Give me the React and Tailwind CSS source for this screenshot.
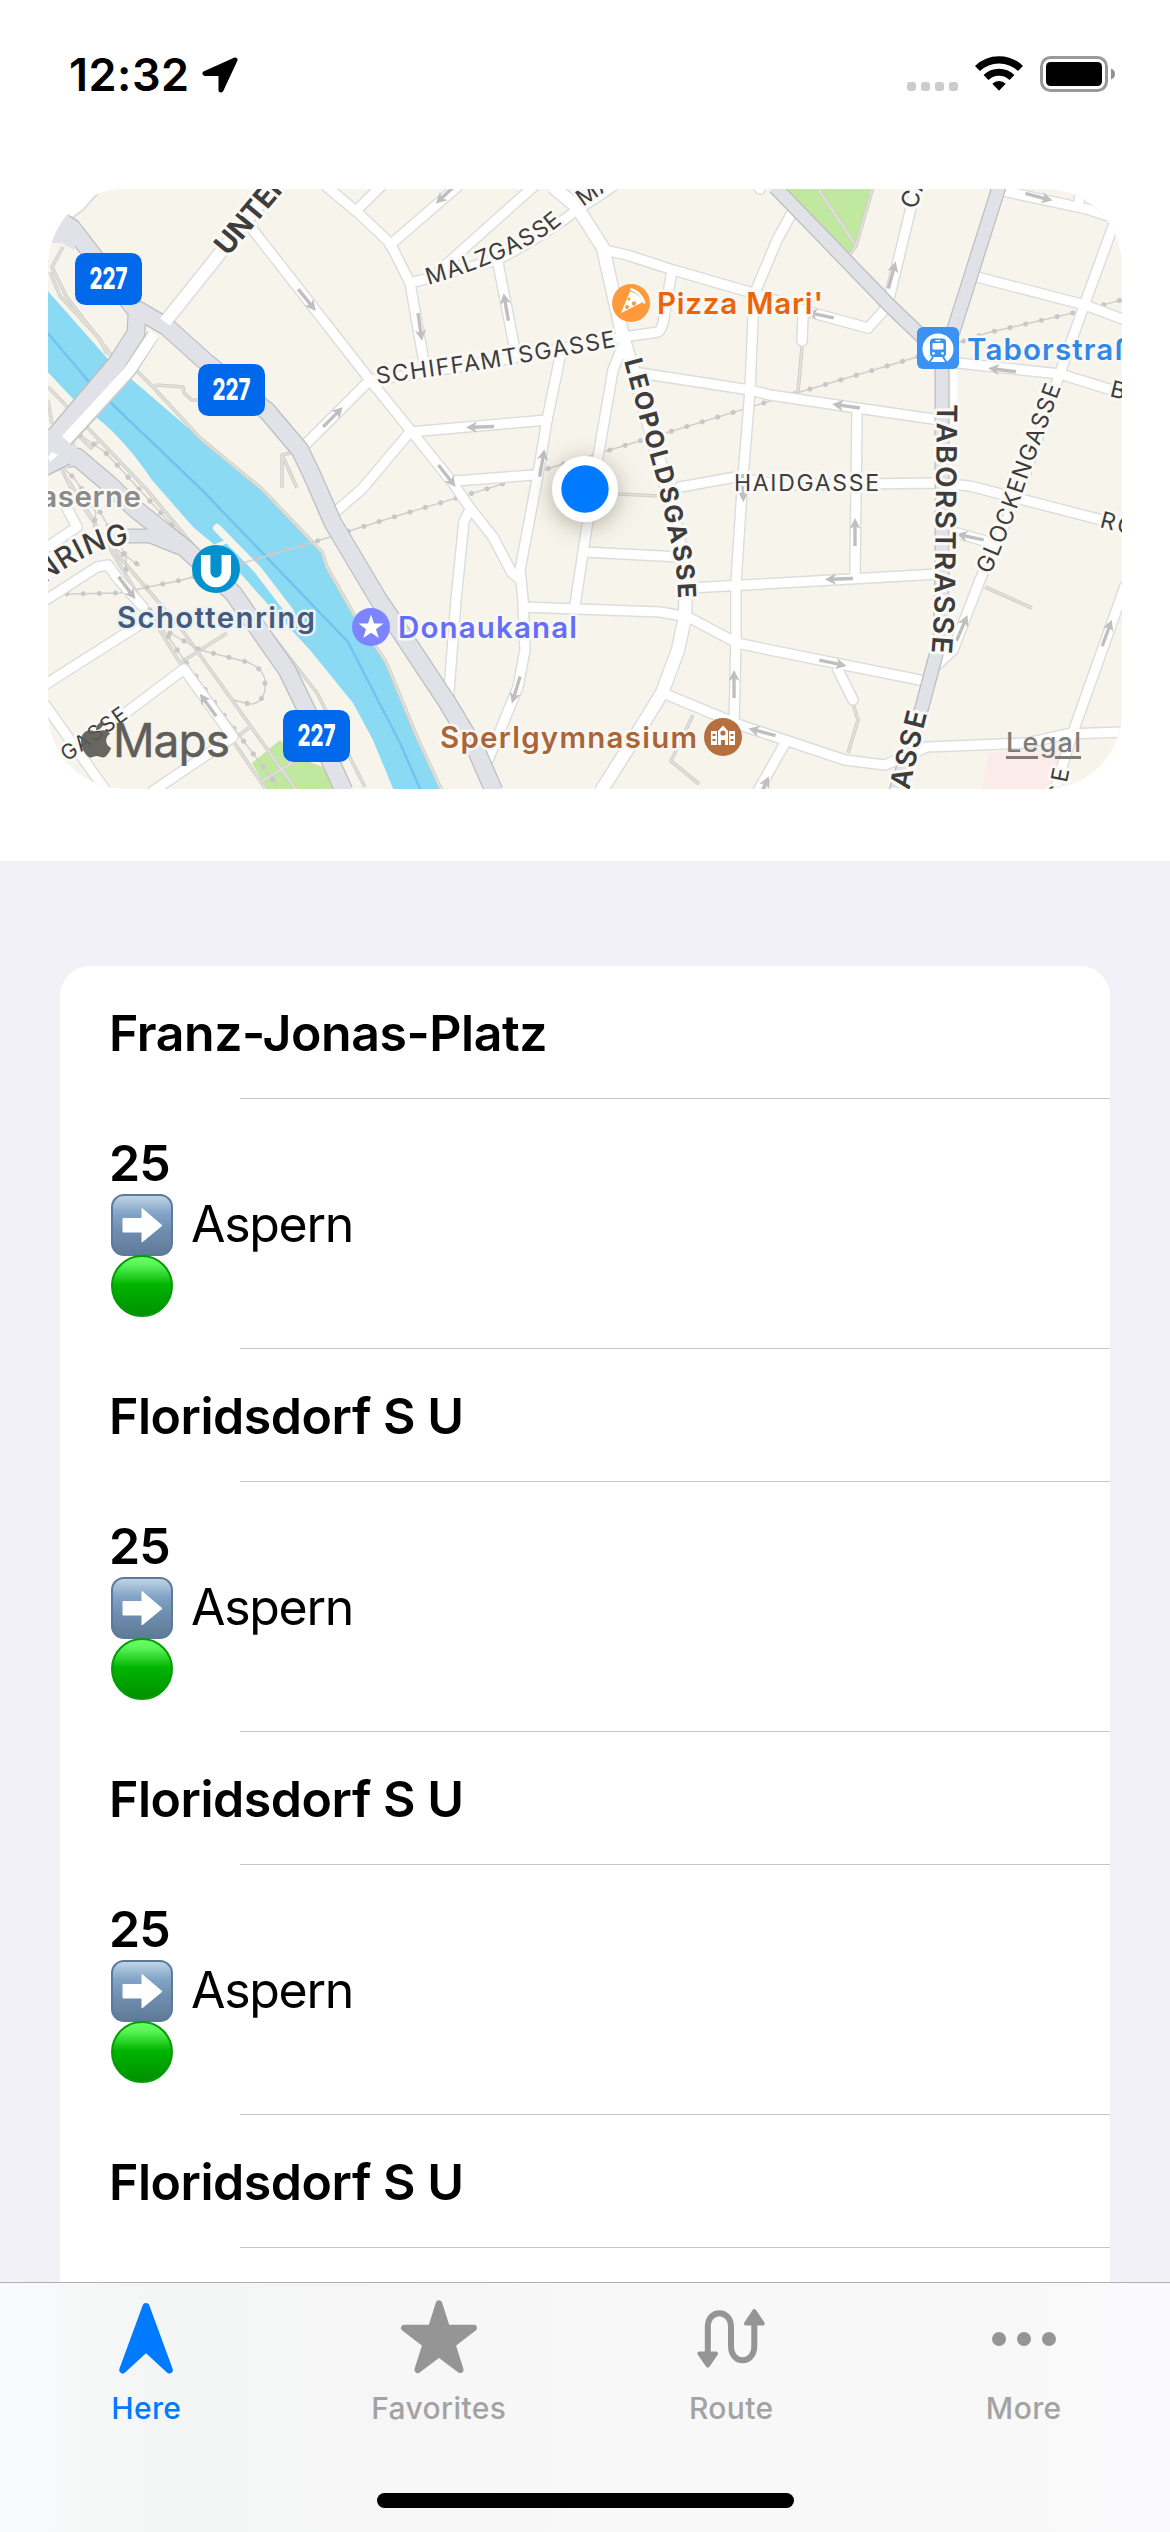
import React from "react";
import { FaApple } from "react-icons/fa";

const streets = [
  "M253 230 L370 380 L453 483 L470 508 L493 537 L512 573 L521 580",
  "M327 187 L357 212 L390 243 L410 283 L423 357",
  "M390 245 L457 187",
  "M357 210 L380 187",
  "M440 270 L533 187",
  "M410 283 L497 260 Q545 235 577 210 L612 187",
  "M498 263 L515 350",
  "M370 380 L403 376 L513 358 L623 337 L658 332 Q662 330 664 318 L672 270",
  "M605 250 L627 255 L673 270 L753 293 L813 313 L868 328 L887 307 L908 220 L916 187",
  "M793 211 L777 240 L754 295 L750 390 L742 490 L736 583 L736 643 L734 722",
  "M640 373 L750 390 L770 395 L850 407 L940 420",
  "M560 357 L547 420 L537 480 L520 570 L523 600 L525 650 L518 687 L488 760",
  "M410 432 L547 420",
  "M410 432 L362 489 L334 513",
  "M370 380 L303 447",
  "M455 481 L534 475",
  "M623 345 L613 370 L598 457 L588 520 L575 605",
  "M523 607 L660 612 L688 617 L737 643 L770 650 L925 681",
  "M585 552 L680 557",
  "M690 588 L780 583 L938 574",
  "M680 487 L736 477 L780 485 L937 483 L970 486 L1125 526",
  "M857 411 L855 577",
  "M803 316 L802 341",
  "M977 277 L1085 305 L1125 320",
  "M1116 218 L1085 303 L1060 373 L1020 490 L980 580 L953 650 L938 664",
  "M958 363 L1060 374 L1125 394",
  "M1003 191 L1087 209 L1118 219",
  "M1080 187 L1079 205",
  "M957 533 L992 543",
  "M1125 586 L1072 735 L1062 767 L1055 791",
  "M663 693 L740 725 L770 735 L845 760 L885 765 L927 747 L1027 743 L1067 734 L1125 732",
  "M838 670 L853 700",
  "M785 743 L758 791",
  "M469 512 L464 521 L456 600 L448 704",
  "M46 600 L97 567 L108 565 L118 579 L143 607",
  "M46 684 L150 618",
  "M60 760 L127 712 L184 669 L233 737 L153 791",
  "M46 706 L106 791",
  "M46 548 L77 527 L67 508",
  "M757 185 L760 189",
];

const wideStreets = [
  "M553 187 L577 207 L603 248 L623 337 L645 410 L670 500 L686 575 L685 617 L678 650 L662 693 L627 750 L601 791",
];

const grayRoads = [
  "M62 222 L72 228 L133 307 L167 327 L207 363 L267 411 L300 450 L312 475 L333 523 L380 602 L400 631 L447 702 L477 752 L494 791",
  "M137 312 L136 333 L117 363 L55 436 L44 452",
  "M44 462 L77 457 L110 485 L133 507 L187 550 L233 593 L287 670 L320 738 L344 791",
];

const grayNarrow = [
  "M775 187 L890 306 L938 352",
  "M999 187 L953 332 L942 365 L942 573 L940 640 L922 707 L896 791",
  "M118 536 L150 536 L180 548",
];

const footpaths = [
  "M50 272 L60 296 L100 339 L106 352 L133 367 L153 387 L200 438 L262 489 L322 552 L327 567 L353 613 L386 662 L417 737 L442 791",
  "M63 247 L52 267 L66 296 L112 356",
  "M153 387 L157 385 L183 387 L184 393 L192 400 L200 400",
  "M282 488 L282 455 L290 453 M282 455 L297 488",
  "M48 387 L87 427 L147 490 L197 550 L247 603 L317 693 L365 787",
  "M78 435 L91 448 L100 440",
  "M48 400 L52 424",
  "M62 470 L72 490 L110 546 L180 627 L297 791",
  "M68 480 L88 512 L138 595 L180 663 L267 791",
  "M180 663 L227 633",
  "M233 740 L250 727",
  "M262 781 L297 760",
  "M802 347 L798 392",
  "M817 187 L856 246 L873 187 M856 246 L850 254",
  "M853 704 L858 720 L848 753",
  "M985 587 L1032 608",
  "M693 715 L671 761 L699 784",
  "M618 494 L660 496",
];

const rails = [
  "M67 594 L120 593 L182 580 L243 563 L327 538 L400 515 L493 487 L550 468 L610 450 L767 402 L800 392 L917 357 L987 333 L1077 312 L1125 299",
  "M170 633 L200 650 L247 662 Q263 668 265 680 L265 690 Q262 704 250 704 L233 700",
  "M80 435 L105 452 L138 488 L190 545",
  "M92 505 L96 513 L93 530 M100 512 L126 556 L126 575 M110 545 L140 566",
  "M150 610 L182 657 L220 710 L248 747 L278 786",
  "M60 465 L74 478 L95 508",
];

const arrows = [
  [307, 300, 51], [333, 417, -45], [446, 194, 137], [420, 327, 82], [506, 307, -100],
  [480, 427, 178], [542, 463, -80], [447, 476, 52], [1039, 197, 15], [892, 275, -75],
  [820, 315, 192], [1002, 370, 187], [846, 406, 188], [127, 588, 53], [208, 705, -126],
  [516, 690, 107], [734, 684, -90], [762, 732, 195], [743, 488, 88], [763, 789, -65],
  [855, 532, -90], [839, 579, 178], [970, 537, 192], [962, 628, -67], [1107, 633, -70],
  [833, 663, 12],
];

function Lines({ paths, ...props }) {
  return (
    <g fill="none" strokeLinejoin="round" {...props}>
      {paths.map((d) => <path key={d} d={d} />)}
    </g>
  );
}

function StreetLabel({ id, d, length, size = 23, weight = 430, children }) {
  return (
    <>
      <path id={id} d={d} fill="none" />
      <text
        fontSize={size}
        fontWeight={weight}
        fill="#3f3d3b"
        stroke="#faf9f5"
        strokeWidth="6"
        strokeLinejoin="round"
        paintOrder="stroke"
        textLength={length}
      >
        <textPath href={`#${id}`} textLength={length}>{children}</textPath>
      </text>
    </>
  );
}

function Place({ x, y, color, length, anchor = "start", halo = "#faf8f3", children }) {
  return (
    <text
      x={x}
      y={y}
      fill={color}
      fontSize="29.5"
      fontWeight="600"
      textAnchor={anchor}
      textLength={length}
      stroke={halo}
      strokeWidth="5"
      strokeLinejoin="round"
      paintOrder="stroke"
    >
      {children}
    </text>
  );
}

function Shield({ x, y }) {
  return (
    <g>
      <rect x={x} y={y} width="67" height="52" rx="10.5" fill="#0069eb" />
      <text x={x + 14.5} y={y + 36} fontSize="30" fontWeight="800" fill="#fff" textLength="38" lengthAdjust="spacingAndGlyphs">227</text>
    </g>
  );
}

function MapView() {
  return (
    <svg viewBox="48 189 1074 600" className="block h-[600px] w-[1074px]" fontFamily="Inter, sans-serif">
      <rect x="48" y="189" width="1074" height="600" fill="#f6f4eb" />
      <path d="M44 189 H99 L84 209 L70 218 L44 250 Z" fill="#fff" />
      <path d="M99 192 L84 209 L70 220" stroke="#dcdedf" strokeWidth="2" fill="none" />
      <path d="M780 187 H873 L857 246 L850 254 Z" fill="#c1e89f" />
      <path d="M252 763 L280 740 L297 757 L323 767 L336 791 H268 Z" fill="#c1e89f" />
      <path d="M989 753 L1060 747 L1049 791 H981 Z" fill="#fbebea" />

      <path
        d="M46 289 L108 359 L130 378 L200 438 L263 490 L323 552 L328 567 L353 613 L387 663 L417 737 L443 791 H394 L373 740 L353 703 L310 650 L273 610 L217 547 L193 527 L152 480 Q125 440 96 417 L74 400 L46 370 Z"
        fill="#8bdaf4"
      />
      <path d="M46 331 L90 383 L110 402 L202 490 L348 642 L400 743 L421 791" fill="none" stroke="#72c3ef" strokeWidth="2.5" />
      <path d="M217 528 L258 570 L290 612" fill="none" stroke="#f6f4eb" strokeWidth="8" strokeLinecap="round" />
      <path d="M215 546 L228 541" stroke="#f6f4eb" strokeWidth="4" />

      <Lines paths={footpaths} stroke="#cfd0cb" strokeWidth="3.6" />
      <Lines paths={footpaths} stroke="#e3e2da" strokeWidth="1.6" />
      <Lines paths={rails} stroke="#cfcfcd" strokeWidth="1.4" />
      <Lines paths={rails} stroke="#c8c8c8" strokeWidth="5" strokeLinecap="round" strokeDasharray="0.1 16" />

      <Lines paths={streets} stroke="#dbdddd" strokeWidth="12" strokeLinecap="round" />
      <Lines paths={wideStreets} stroke="#dbdddd" strokeWidth="15" />
      <path d="M165 322 L217 257 L288 168" stroke="#dbdddd" strokeWidth="15" fill="none" />
      <Lines paths={streets} stroke="#fff" strokeWidth="9.2" strokeLinecap="round" />
      <Lines paths={wideStreets} stroke="#fff" strokeWidth="12.2" />

      <Lines paths={grayRoads} stroke="#bdbec1" strokeWidth="19" />
      <Lines paths={grayNarrow} stroke="#bdbec1" strokeWidth="15" />
      <Lines paths={grayRoads} stroke="#e1e2e7" strokeWidth="16.5" />
      <Lines paths={grayNarrow} stroke="#e1e2e7" strokeWidth="12.5" />
      <path d="M48 236 L58 228 L62 220 L67 213 L78 231 L74 250 L62 243 H48 Z" fill="#e1e2e7" />
      <path d="M48 430 L70 428 L78 452 L68 468 L48 474 Z" fill="#e1e2e7" />
      <path d="M48 475 L70 464" stroke="#bdbec1" strokeWidth="1.5" />
      <path d="M153 335 L130 371 L67 441" stroke="#c9cbcd" strokeWidth="13" fill="none" />
      <path d="M154 334 L130 370 L66 440" stroke="#fff" strokeWidth="11" fill="none" />
      <path d="M165 322 L217 257 L288 168" stroke="#fff" strokeWidth="12" fill="none" />
      <path d="M48 457 l4 -5 l6 3 l-8 7 Z" fill="#fff" />
      <path d="M954 370 V425" stroke="#fff" strokeWidth="6" />

      <g stroke="#bfbfbf" strokeWidth="3.4" fill="none">
        {arrows.map(([x, y, a]) => (
          <g key={`${x}-${y}`} transform={`translate(${x} ${y}) rotate(${a})`}>
            <path d="M-14 0 H8" />
            <path d="M14 0 L3 -5.6 L6 0 L3 5.6 Z" fill="#bfbfbf" stroke="none" />
          </g>
        ))}
      </g>

      <StreetLabel id="malz" d="M428 285 Q508 262 556 228 L580 209" length="149">MALZGASSE</StreetLabel>
      <StreetLabel id="mal2" d="M583 207 L660 153" length="52">MAL</StreetLabel>
      <StreetLabel id="schiff" d="M377 384 L480 370 L632 344" length="242">SCHIFFAMTSGASSE</StreetLabel>
      <StreetLabel id="leo" d="M624 361 L642 427 L657 480 L669 535 Q678 568 678 602 V620" length="244" size={25} weight={650}>LEOPOLDSGASSE</StreetLabel>
      <StreetLabel id="haid" d="M734 491 H890" length="145">HAIDGASSE</StreetLabel>
      <StreetLabel id="tabor" d="M937 404 L935 570 Q935 620 930 670" length="249" size={28} weight={600}>TABORSTRASSE</StreetLabel>
      <StreetLabel id="glock" d="M990 575 Q1012 525 1026 482 L1066 374" length="201">GLOCKENGASSE</StreetLabel>
      <StreetLabel id="gasse3" d="M905 812 Q915 760 932 695" length="101" size={28} weight={600}>GASSE</StreetLabel>
      <StreetLabel id="unter" d="M228 257 L320 147" length="114" size={29} weight={650}>UNTERE</StreetLabel>
      <StreetLabel id="ro" d="M1099 527 L1150 540" length="35">RO</StreetLabel>
      <StreetLabel id="bb" d="M1109 396 L1150 406" length="15">B</StreetLabel>
      <StreetLabel id="ca" d="M916 210 L936 150" length="35" size={24}>CA</StreetLabel>
      <StreetLabel id="se" d="M1063 802 L1074 748" length="33">SE</StreetLabel>
      <StreetLabel id="gasse1" d="M67 762 L155 699" length="76" size={21}>GASSE</StreetLabel>
      <StreetLabel id="nring" d="M44 584 Q80 556 106 549 L150 538" length="96" size={29} weight={550}>NRING</StreetLabel>

      <Place x={141} y={507} color="#8a8b8c" anchor="end" length={122}>Kaserne</Place>
      <Place x={117} y={628} color="#465a7c" length={198} halo="#eaf2f4">Schottenring</Place>
      <Place x={398} y={638} color="#636ffa" length={179}>Donaukanal</Place>
      <Place x={440} y={748} color="#aa6539" length={257}>Sperlgymnasium</Place>
      <Place x={657} y={314} color="#ea640e" length={166}>Pizza Mari'</Place>
      <Place x={967} y={360} color="#3088ea" length={185}>Taborstraße</Place>

      <Shield x={75} y={253} />
      <Shield x={198} y={364} />
      <Shield x={283} y={710} />

      <g>
        <circle cx="631" cy="303" r="19" fill="#ff9a3c" />
        <path d="M630 291.5 Q640 294 643 302 L621 313 Z" fill="#fff" />
        <path d="M630.5 289 Q641 292 644.5 303.5" fill="none" stroke="#fff" strokeWidth="2.4" />
        <circle cx="627" cy="307" r="2" fill="#ff9a3c" />
        <circle cx="634" cy="303.5" r="2.2" fill="#ff9a3c" />
        <circle cx="629" cy="299" r="1.5" fill="#ff9a3c" />
      </g>
      <g>
        <rect x="917" y="327" width="42" height="42" rx="6" fill="#3c92f2" />
        <circle cx="938" cy="349" r="15.5" fill="#fff" />
        <path d="M930 362 h16 l4 7 h-24 Z" fill="#3c92f2" />
        <rect x="930" y="338.5" width="16" height="18.5" rx="3.5" fill="#3c92f2" />
        <rect x="932.5" y="343" width="11" height="6.5" rx="1" fill="#fff" />
        <path d="M935.5 340.7 h5" stroke="#fff" strokeWidth="1.3" />
        <circle cx="933.5" cy="353.3" r="1.4" fill="#fff" />
        <circle cx="942.5" cy="353.3" r="1.4" fill="#fff" />
        <path d="M933 357 l-4 6 M943 357 l4 6" stroke="#3c92f2" strokeWidth="2" />
        <path d="M932 361.5 h12 l-2 -3 h-8 Z" fill="#fff" />
      </g>
      <g>
        <circle cx="216" cy="569" r="24" fill="#0490cd" />
        <path d="M205.7 555 V572 A10.3 10.5 0 0 0 226.3 572 V555" fill="none" stroke="#fff" strokeWidth="9.5" />
      </g>
      <g>
        <circle cx="371" cy="627" r="19" fill="#7c85ff" />
        <path d="M371 614.5 L374 623.5 L383.5 623.5 L376 629.2 L378.8 638 L371 632.7 L363.2 638 L366 629.2 L358.5 623.5 L368 623.5 Z" fill="#fff" />
      </g>
      <g>
        <circle cx="723" cy="737" r="19" fill="#b6703e" />
        <path d="M711 731 h6 v14 h-6 Z M729 731 h6 v14 h-6 Z M718 745 V731 L723 725.5 L728 731 V745 h-3 v-5 h-4 v5 Z" fill="#fff" />
        <circle cx="723" cy="733" r="2.6" fill="#b6703e" />
        <path d="M712.5 735 h3 M712.5 740 h3 M730.5 735 h3 M730.5 740 h3" stroke="#b6703e" strokeWidth="2" />
      </g>

      <defs>
        <filter id="dotShadow" x="-60%" y="-60%" width="220%" height="220%">
          <feDropShadow dx="0" dy="4" stdDeviation="11" floodColor="#6b6350" floodOpacity="0.5" />
        </filter>
      </defs>
      <circle cx="585" cy="489" r="33" fill="#fff" filter="url(#dotShadow)" />
      <circle cx="585" cy="489" r="23.7" fill="#007aff" />

      <FaApple x="75.5" y="719" size={41} color="#5c5b57" opacity="0.93" />
      <text x="113" y="757" fontSize="46" fontWeight="400" fill="#5f5e5a" stroke="#5f5e5a" strokeWidth="0.5" textLength="117">Maps</text>
      <text x="1006" y="752" fontSize="27" fontWeight="550" fill="#7e7c79" textLength="75">Legal</text>
      <path d="M1006 757.5 H1038 M1055 757.5 H1081" stroke="#7e7c79" strokeWidth="3" />
    </svg>
  );
}

function StatusBar() {
  return (
    <div className="flex h-[189px] items-start justify-between pl-[69px] pr-[55px] pt-[50px]">
      <div className="flex items-center gap-[12px]">
        <span className="text-[45px] font-semibold leading-[50px] tracking-[0.5px]">12:32</span>
        <svg viewBox="0 0 36 36" className="h-9 w-9">
          <path d="M33 3 L3 16.5 H19 V33 Z" fill="#000" stroke="#000" strokeWidth="5" strokeLinejoin="round" />
        </svg>
      </div>
      <div className="mt-[5px] flex h-[38px]">
        <div className="mt-[27px] flex gap-[5px]">
          {[0, 1, 2, 3].map((i) => <span key={i} className="h-[9px] w-[9px] rounded-[3px] bg-[#cccccc]" />)}
        </div>
        <svg viewBox="0 0 48 36" className="ml-[17px] h-9 w-12">
          <path d="M2.5 13.5 A31 31 0 0 1 45.5 13.5" fill="none" stroke="#000" strokeWidth="7.2" />
          <path d="M11 22.5 A18.8 18.8 0 0 1 37 22.5" fill="none" stroke="#000" strokeWidth="7" />
          <path d="M17.3 28.8 A9.5 9.5 0 0 1 30.7 28.8 L24 35.8 Z" fill="#000" />
        </svg>
        <svg viewBox="0 0 75 36" className="ml-[17px] mt-px h-9 w-[75px]">
          <rect x="1.5" y="1.5" width="65" height="33" rx="9" fill="none" stroke="#999" strokeWidth="3" />
          <rect x="6" y="6" width="56" height="24" rx="4.5" fill="#000" />
          <path d="M71 12.5 Q75 14 75 18 Q75 22 71 23.5 Z" fill="#8f8f8f" />
        </svg>
      </div>
    </div>
  );
}

function ArrowTile() {
  return (
    <svg viewBox="0 0 62 62" className="h-[62px] w-[62px]">
      <defs>
        <linearGradient id="tile" x1="0" y1="0" x2="0" y2="1">
          <stop offset="0" stopColor="#c3d6e6" />
          <stop offset="0.3" stopColor="#84a5c8" />
          <stop offset="0.55" stopColor="#7190b2" />
          <stop offset="1" stopColor="#5f7a98" />
        </linearGradient>
      </defs>
      <rect x="1" y="1" width="60" height="60" rx="12" fill="url(#tile)" stroke="#5c7a9a" strokeWidth="2" />
      <path d="M12 24.5 H31 V14.5 L51 31.5 L31 48 V38 H12 Z" fill="#fff" stroke="#fff" strokeLinejoin="round" />
    </svg>
  );
}

function GreenDot() {
  return (
    <svg viewBox="0 0 62 62" className="block h-[62px] w-[62px]">
      <defs>
        <linearGradient id="dot" x1="0" y1="0" x2="0" y2="1">
          <stop offset="0" stopColor="#6dff6a" />
          <stop offset="0.15" stopColor="#58f555" />
          <stop offset="0.48" stopColor="#00b400" />
          <stop offset="1" stopColor="#008f00" />
        </linearGradient>
      </defs>
      <circle cx="31" cy="31" r="30" fill="url(#dot)" stroke="#049c04" strokeWidth="2" />
    </svg>
  );
}

function Stop({ name, line, towards }) {
  return (
    <>
      <div className="h-[133px] shrink-0">
        <div className="h-[132px] pl-[49px] pt-[37px] text-[50px] font-semibold leading-[61px] tracking-[-0.45px]">{name}</div>
        <div className="ml-[180px] h-px bg-[#c6c6c8]" />
      </div>
      {line && (
        <div className="h-[250px] shrink-0">
          <div className="h-[249px] pl-[51px] pt-[34px]">
            <div className="-ml-[2px] text-[50px] font-semibold leading-[61px] tracking-[-0.9px]">{line}</div>
            <div className="flex h-[61px] items-center">
              <ArrowTile />
              <span className="ml-[18px] text-[50px] leading-[61px] tracking-[-1.3px]">{towards}</span>
            </div>
            <GreenDot />
          </div>
          <div className="ml-[180px] h-px bg-[#c6c6c8]" />
        </div>
      )}
    </>
  );
}

const tabs = [
  { label: "Here", active: true },
  { label: "Favorites" },
  { label: "Route" },
  { label: "More" },
];

const gray = "#959595";

function TabIcon({ label }) {
  if (label === "Here")
    return <path d="M40 7.5 L63.3 71 L40 49.5 L16.7 71 Z" fill="#007aff" stroke="#007aff" strokeWidth="7" strokeLinejoin="round" />;
  if (label === "Favorites")
    return <path d="M40 4.5 L47.8 29 L74.7 29 L53.3 45.5 L61.3 70.8 L40 54.8 L18.7 70.8 L26.7 45.5 L5.3 29 L32.2 29 Z" fill={gray} stroke={gray} strokeWidth="6.5" strokeLinejoin="round" />;
  if (label === "Route")
    return (
      <g>
        <path d="M16.8 56 V28 C16.8 9.5 40 9.5 40 28 V47 C40 66 63.3 66 63.3 47 V22" fill="none" stroke={gray} strokeWidth="6" />
        <path d="M8.5 54.5 H25 L16.8 66.5 Z M55 24.5 H71.8 L63.3 12 Z" fill={gray} stroke={gray} strokeWidth="4" strokeLinejoin="round" />
      </g>
    );
  return (
    <g fill={gray}>
      <circle cx="15" cy="40" r="7" />
      <circle cx="40" cy="40" r="7" />
      <circle cx="65" cy="40" r="7" />
    </g>
  );
}

function TabBar() {
  return (
    <nav className="flex h-[250px] shrink-0 flex-col border-t border-[#b0b0b3] bg-[linear-gradient(90deg,#f8fafd_0%,#f6f9f8_6%,#f3f6f4_13%,#f4f6f5_20%,#f6f6f6_30%,#f8f8f8_50%,#f8f8f8_88%,#fafafc_97%)]">
      <div className="grid grid-cols-4">
        {tabs.map(({ label, active }) => (
          <div key={label} className={active ? "flex flex-col items-center pt-4 text-[#007aff]" : "flex flex-col items-center pt-4 text-[#a3a3a3]"}>
            <svg viewBox="0 0 80 80" className="h-20 w-20">
              <TabIcon label={label} />
            </svg>
            <span className="mt-[9px] text-[30px] font-medium leading-10 tracking-[0.4px]">{label}</span>
          </div>
        ))}
      </div>
      <div className="mx-auto mt-[65px] h-[15px] w-[417px] rounded-full bg-black" />
    </nav>
  );
}

export default function App() {
  return (
    <div className="flex h-[2532px] w-[1170px] flex-col overflow-hidden bg-white font-['Inter',sans-serif] text-black">
      <StatusBar />
      <div className="mx-12 h-[600px] shrink-0 overflow-hidden rounded-[77px]">
        <MapView />
      </div>
      <main className="mt-[72px] min-h-0 flex-1 overflow-hidden bg-[#f2f1f7] px-[60px] pt-[105px]">
        <div className="flex h-full flex-col overflow-hidden rounded-t-[30px] bg-white">
          <Stop name="Franz-Jonas-Platz" line="25" towards="Aspern" />
          <Stop name="Floridsdorf S U" line="25" towards="Aspern" />
          <Stop name="Floridsdorf S U" line="25" towards="Aspern" />
          <Stop name="Floridsdorf S U" />
        </div>
      </main>
      <TabBar />
    </div>
  );
}
